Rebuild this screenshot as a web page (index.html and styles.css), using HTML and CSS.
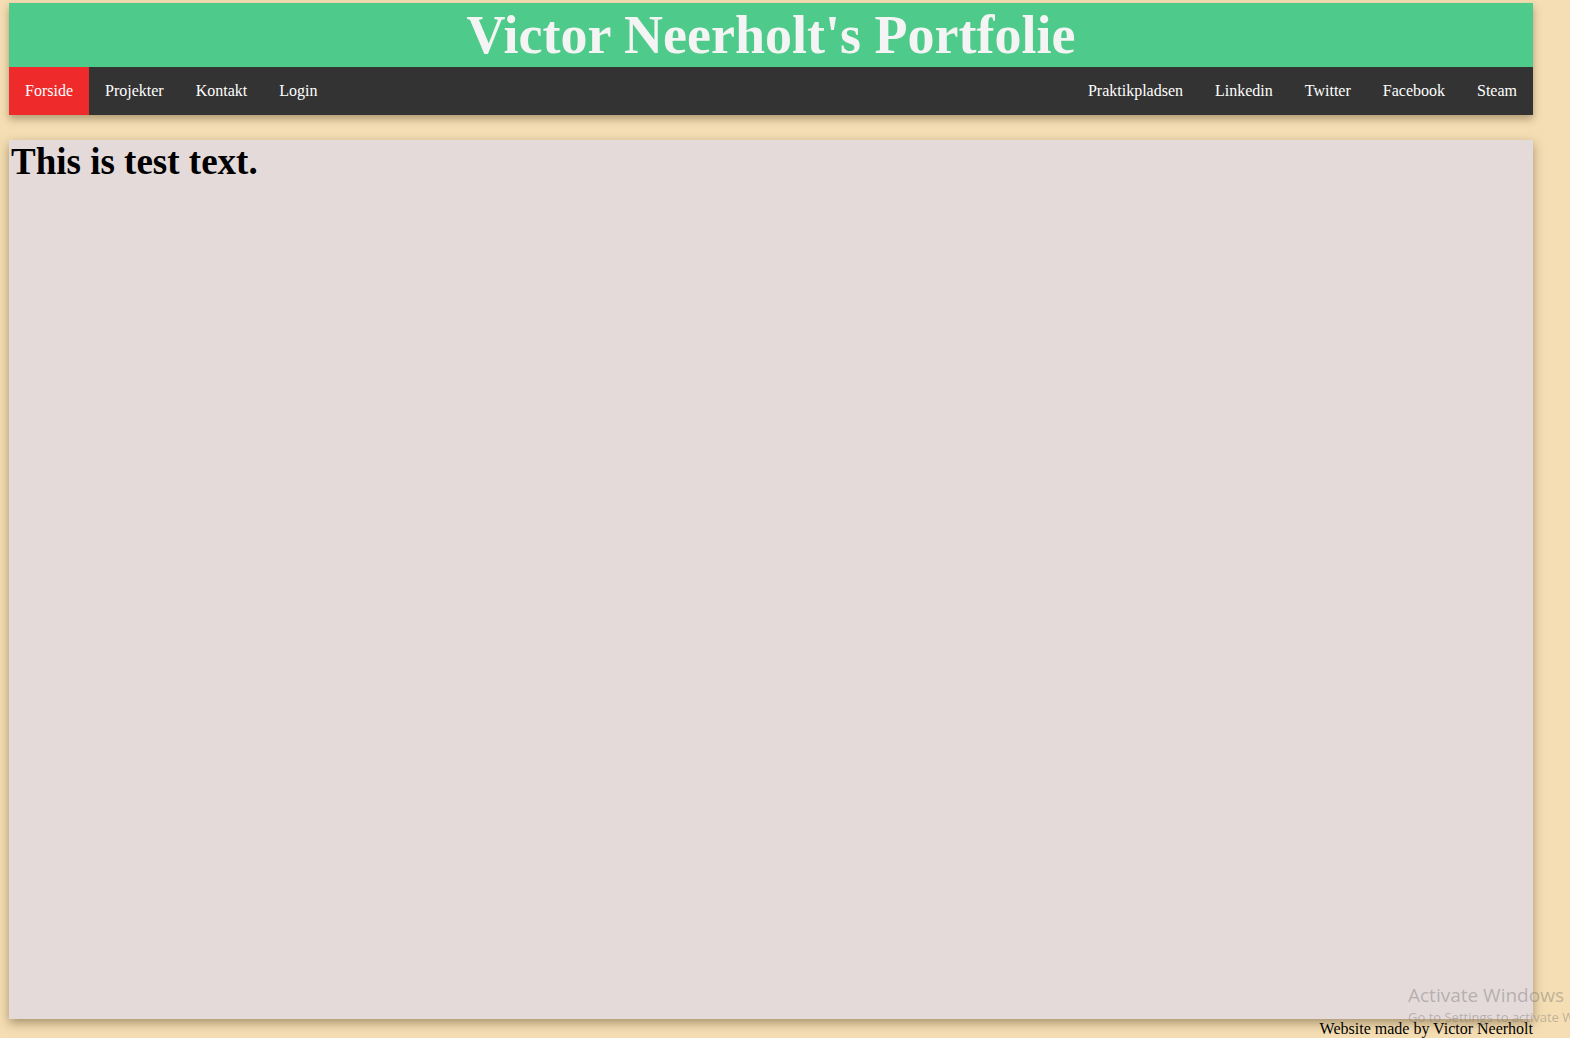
FILE: index.html
```html
<!DOCTYPE html>
<html>
<head>
<meta charset="utf-8">
<link rel="stylesheet" href="styles.css">
</head>
<body>
<div class="page">
  <header class="top">
    <div class="banner">Victor Neerholt's Portfolie</div>
    <nav class="nav">
      <div class="nav-left">
        <a class="nav-item active">Forside</a>
        <a class="nav-item">Projekter</a>
        <a class="nav-item">Kontakt</a>
        <a class="nav-item">Login</a>
      </div>
      <div class="nav-right">
        <a class="nav-item">Praktikpladsen</a>
        <a class="nav-item">Linkedin</a>
        <a class="nav-item">Twitter</a>
        <a class="nav-item">Facebook</a>
        <a class="nav-item">Steam</a>
      </div>
    </nav>
  </header>
  <main class="content">
    <h1 class="content-title">This is test text.</h1>
  </main>
  <footer class="footer">Website made by Victor Neerholt</footer>
</div>
<div class="watermark">
  <div class="wm-title">Activate Windows</div>
  <div class="wm-sub">Go to Settings to activate Windows.</div>
</div>
</body>
</html>
```

FILE: styles.css
```css
html, body {
  margin: 0;
  padding: 0;
}
body {
  background: #f5deb3;
  font-family: "Liberation Serif", "Times New Roman", serif;
  width: 1570px;
  height: 1038px;
  overflow: hidden;
  position: relative;
}
.page {
  padding: 3px 37px 0 9px;
  display: flex;
  flex-direction: column;
}
.top {
  box-shadow: 0 4px 8px rgba(90, 70, 40, 0.45);
}
.banner {
  background: #4eca8a;
  color: #f3f4f3;
  font-weight: bold;
  font-size: 54px;
  line-height: 64px;
  height: 64px;
  text-align: center;
  overflow: hidden;
}
.nav {
  background: #333333;
  height: 48px;
  display: flex;
  justify-content: space-between;
}
.nav-left, .nav-right {
  display: flex;
}
.nav-item {
  color: #ffffff;
  font-size: 16px;
  line-height: 20px;
  padding: 14px 16px;
  text-decoration: none;
}
.nav-item.active {
  background: #ee2a2a;
}
.content {
  margin-top: 25px;
  height: 879px;
  background: #e5dada;
  box-shadow: 0 4px 10px rgba(90, 70, 40, 0.5);
}
.content-title {
  margin: 0;
  padding: 2px 0 0 2px;
  font-size: 37px;
  line-height: 40px;
  font-weight: bold;
  color: #000;
}
.footer {
  text-align: right;
  font-size: 16px;
  line-height: 18px;
  color: #000;
  margin-top: 1px;
}
.watermark {
  position: absolute;
  left: 1408px;
  top: 983px;
  font-family: "Open Sans", "Noto Sans", sans-serif;
  color: rgba(120, 120, 120, 0.45);
  white-space: nowrap;
  pointer-events: none;
}
.wm-title {
  font-size: 19px;
  line-height: 24px;
}
.wm-sub {
  font-size: 13px;
  line-height: 20px;
}
```
